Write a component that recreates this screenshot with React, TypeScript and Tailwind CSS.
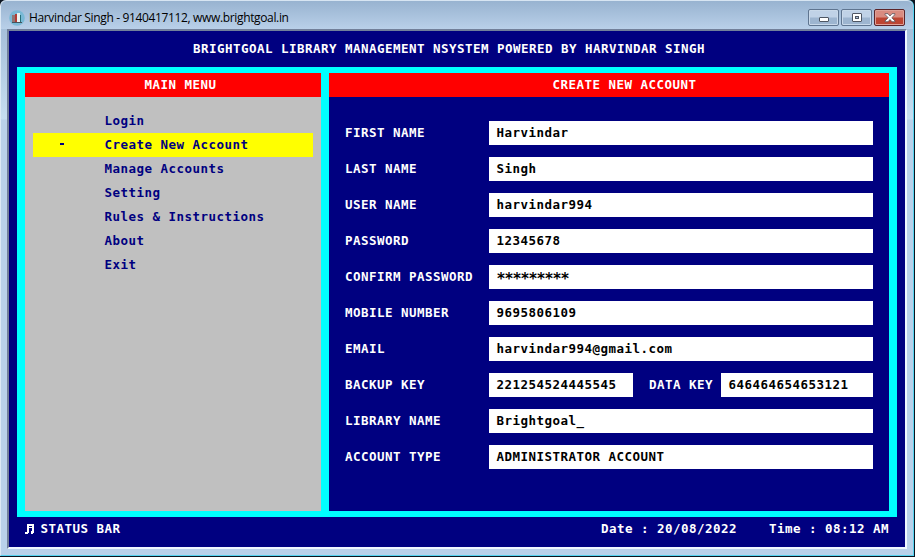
import React from "react";

const menu = ["Login", "Create New Account", "Manage Accounts", "Setting", "Rules & Instructions", "About", "Exit"];

type Row = { label: string; value: string };

const upper: Row[] = [
  { label: "FIRST NAME", value: "Harvindar" },
  { label: "LAST NAME", value: "Singh" },
  { label: "USER NAME", value: "harvindar994" },
  { label: "PASSWORD", value: "12345678" },
  { label: "CONFIRM PASSWORD", value: "*********" },
  { label: "MOBILE NUMBER", value: "9695806109" },
  { label: "EMAIL", value: "harvindar994@gmail.com" },
];

const lower: Row[] = [
  { label: "LIBRARY NAME", value: "Brightgoal_" },
  { label: "ACCOUNT TYPE", value: "ADMINISTRATOR ACCOUNT" },
];

function Field({ label, value }: Row) {
  return (
    <div className="flex h-6">
      <label className="w-36 shrink-0">{label}</label>
      <div className="w-96 bg-white pl-[7.5px] text-black">
        {value.startsWith("*") ? (
          <span className="inline-block pt-[2px] text-[15px] leading-6 tracking-[-1.03px]">{value}</span>
        ) : (
          value
        )}
      </div>
    </div>
  );
}

const plainButton =
  "flex h-[17px] w-[31px] items-center justify-center rounded-[2px] border border-[#5f7590] bg-linear-to-b from-[#c0d2e7] from-45% to-[#9db5d0] to-55% shadow-[inset_0_0_0_1px_#c9d9ea]";

export default function App() {
  return (
    <div className="h-[557px] w-[915px] overflow-hidden bg-[#0b1420] font-['DejaVu_Sans_Mono',monospace]">
      <div className="flex h-[556px] w-[914px] flex-col rounded-t-[6px] border-r border-b border-l border-[#55d3f0] border-l-[#dce9f5] bg-linear-to-b from-[#9cb6d3] from-0% via-[#c6def1] via-[119px] to-[#b9d1ea] to-[120px]">
        <header className="flex h-[29px] shrink-0 items-center rounded-t-[6px] border-t border-[#d7e5f2] bg-linear-to-b from-[#98b3d0] to-[#b9d0e9] pt-[5px] pr-2 pl-2">
          <svg className="shrink-0" width="16" height="16" viewBox="0 0 16 16">
            <circle cx="8" cy="8" r="7.8" fill="#79b9d6" />
            <path d="M3 5h3v7H3z" fill="#8f7777" />
            <path d="M6 4h2v8H6z" fill="#b33c36" />
            <path d="M8 3h3v9H8z" fill="#e9f3f0" />
            <path d="M11 5h1v7h-1z" fill="#276f78" />
            <path d="M3 12h10v1H3z" fill="#46545e" />
          </svg>
          <span className="ml-1 text-[12px] whitespace-nowrap text-black font-['Open_Sans','Noto_Sans',sans-serif] tracking-[-0.35px]">
            Harvindar Singh - 9140417112, www.brightgoal.in
          </span>
          <div className="ml-auto flex gap-[2px]">
            <div className={plainButton}>
              <svg className="mt-[3px]" width="12" height="8" viewBox="0 0 12 8">
                <rect x="1.5" y="2.5" width="9" height="4" rx=".5" fill="#fff" stroke="#4e5663" />
              </svg>
            </div>
            <div className={plainButton}>
              <svg width="12" height="10" viewBox="0 0 12 10">
                <rect x="1.5" y=".5" width="9" height="8" rx=".5" fill="#fff" stroke="#4e5663" />
                <rect x="4.5" y="3.5" width="3" height="2" fill="#a9bdd5" stroke="#4e5663" />
              </svg>
            </div>
            <div className="flex h-[17px] w-[31px] items-center justify-center rounded-[2px] border border-[#5c2429] bg-linear-to-b from-[#d98b80] from-45% to-[#bd4533] to-55% shadow-[inset_0_0_0_1px_#dfa198]">
              <svg width="12" height="10" viewBox="0 0 12 10">
                <path d="M1 .7h3L6 3 8 .7h3v.8L7.8 4.7 11 8v.8H8L6 6.5 4 8.800H1V8l3.200-3.300L1 1.500z" fill="#fff" stroke="#59535c" strokeWidth=".8" />
              </svg>
            </div>
          </div>
        </header>

        <main className="ml-[6px] flex h-[520px] w-[900px] shrink-0 flex-col border-2 border-t-[#72809a] border-r-[#eef6ff] border-b-[#eef6ff] border-l-[#72809a] bg-[#000080] text-[12.5px] leading-6 font-bold tracking-[0.475px] whitespace-pre text-white">
          <h1 className="h-9 shrink-0 pl-46 leading-9">BRIGHTGOAL LIBRARY MANAGEMENT NSYSTEM POWERED BY HARVINDAR SINGH</h1>
          <div className="mx-2 flex h-[450px] shrink-0 gap-2 bg-[#00ffff] px-2 py-1.5">
            <nav className="w-[296px] bg-[#c0c0c0] text-[#000080]">
              <h2 className="h-6 bg-[#ff0000] pl-[119.5px] text-white">MAIN MENU</h2>
              <ul className="px-2 pt-3">
                {menu.map((item, i) => (
                  <li key={item} className={i === 1 ? "flex h-6 bg-[#ffff00]" : "flex h-6"}>
                    <span className="w-[71.5px] pt-[10px] pl-[27px]">
                      {i === 1 && <span className="block h-[2px] w-[4px] bg-[#000080]" />}
                    </span>
                    {item}
                  </li>
                ))}
              </ul>
            </nav>
            <section className="w-[560px] bg-[#000080]">
              <h2 className="h-6 bg-[#ff0000] pl-[223.5px]">CREATE NEW ACCOUNT</h2>
              <form className="flex flex-col gap-3 px-4 pt-6">
                {upper.map((r) => (
                  <Field key={r.label} {...r} />
                ))}
                <div className="flex h-6">
                  <label className="w-36">BACKUP KEY</label>
                  <div className="w-36 bg-white pl-[7.5px] text-black">221254524445545</div>
                  <label className="w-[88px] pl-4">DATA KEY</label>
                  <div className="w-[152px] bg-white pl-[7.5px] text-black">646464654653121</div>
                </div>
                {lower.map((r) => (
                  <Field key={r.label} {...r} />
                ))}
              </form>
            </section>
          </div>
          <footer className="flex h-6 px-4">
            <svg className="mt-[7px] mr-[6.500px]" width="9" height="11" viewBox="0 0 9 11" shapeRendering="crispEdges">
              <path d="M2 0h7v9H8v1H6V7h1V4H4v5H3v1H0V8h2zM4 2v1h3V2z" fill="#fff" fillRule="evenodd" />
            </svg>
            <span>STATUS BAR</span>
            <span className="ml-auto">Date : 20/08/2022    Time : 08:12 AM</span>
          </footer>
        </main>
      </div>
    </div>
  );
}
